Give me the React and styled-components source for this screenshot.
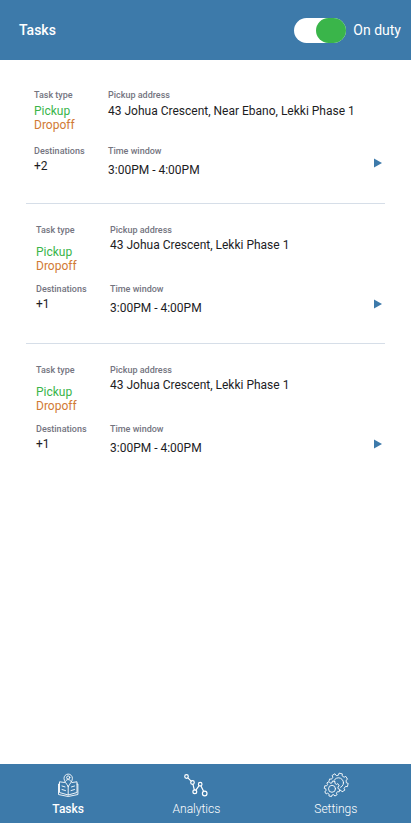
import React, { useState } from 'react';
import styled, { createGlobalStyle, css } from 'styled-components';

const blue = '#3d7aaa';
const green = '#3ab54a';
const orange = '#d17a34';

const GlobalStyle = createGlobalStyle`
  * {
    box-sizing: border-box;
  }

  body {
    margin: 0;
    background: #fff;
    color: #1d1d1f;
    font-family: Roboto, "Liberation Sans", sans-serif;
    font-size: 12px;
    line-height: 14px;
  }
`;

const Page = styled.div`
  display: flex;
  flex-direction: column;
  min-height: 100vh;
`;

const Header = styled.header`
  display: flex;
  align-items: center;
  justify-content: space-between;
  height: 60px;
  padding: 0 10px 0 19px;
  background: ${blue};
  color: #fff;
`;

const Title = styled.h1`
  margin: 0;
  font-size: 14px;
  font-weight: 500;
  line-height: 16px;
`;

const Duty = styled.label`
  display: flex;
  align-items: center;
  gap: 7px;
  font-size: 14px;
  line-height: 16px;
  cursor: pointer;
`;

const Toggle = styled.input`
  appearance: none;
  display: flex;
  width: 52px;
  height: 25px;
  margin: 0;
  border-radius: 13px;
  background: #fff;
  cursor: pointer;

  &::before {
    content: '';
    width: 30px;
    border-radius: 13px;
    background: #9aa5ae;
  }

  &:checked {
    justify-content: flex-end;
  }

  &:checked::before {
    background: ${green};
  }
`;

const List = styled.main`
  flex: 1;
  padding: 0 26px;
`;

const Card = styled.article`
  display: grid;
  grid-template-columns: 74px 1fr auto;
  row-gap: 10px;
  padding: 20px 0 28px 10px;

  & + & {
    border-top: 1px solid #d6dee8;
  }

  ${({ $compact }) => $compact && css`
    row-gap: 13px;
    padding: 29px 0 26px 8px;
  `}
`;

const Field = styled.div`
  display: flex;
  flex-direction: column;
  gap: ${({ $gap }) => $gap || 2}px;
  grid-column: ${({ $wide }) => ($wide ? 'span 2' : 'auto')};
`;

const Label = styled.span`
  color: #747480;
  font-size: 9px;
  font-weight: 500;
  line-height: 12px;
`;

const Kind = styled.span`
  display: block;
  color: ${({ $color }) => $color};
`;

const Open = styled.button`
  display: flex;
  align-items: center;
  justify-content: center;
  align-self: end;
  width: 14px;
  height: ${({ $compact }) => ($compact ? 28 : 22)}px;
  padding: 0;
  border: 0;
  background: none;
  color: ${blue};
  cursor: pointer;
`;

const Nav = styled.nav`
  display: grid;
  grid-template-columns: 128fr 128fr 150fr;
  height: 59px;
  padding-left: 4px;
  background: ${blue};
`;

const NavLink = styled.a`
  display: flex;
  flex-direction: column;
  align-items: center;
  gap: 4px;
  padding-top: 8px;
  color: #fff;
  font-weight: ${({ $active }) => ($active ? 500 : 300)};
  text-decoration: none;

  svg {
    fill: none;
    stroke: #fff;
    stroke-linejoin: round;
    stroke-linecap: round;
  }
`;

function gear(cx, cy, outer, inner, teeth) {
  const step = (Math.PI * 2) / teeth;
  const points = [];
  for (let i = 0; i < teeth; i++) {
    const a = (i + 0.3) * step - Math.PI / 2;
    [[-0.3, inner], [-0.22, outer], [0.22, outer], [0.3, inner]].forEach(([t, r]) => {
      points.push(`${(cx + r * Math.cos(a + t * step)).toFixed(2)} ${(cy + r * Math.sin(a + t * step)).toFixed(2)}`);
    });
  }
  return `M${points.join('L')}Z`;
}

const TasksIcon = () => (
  <svg width="24" height="26" viewBox="0 0 24 26" strokeWidth="0.9" aria-hidden="true">
    <path d="M8.5 10.5L3.5 9.800V20.500l8.700 2.500L21 20.500V9.800L16 10.500" />
    <path d="M3.500 12H2.500V22.500l9.700 2 9.700-2V12H21" />
    <path d="M12.200 14.500C10.500 11.500 8 9.300 8 6.300a4.200 4.200 0 0 1 8.400 0C16.400 9.300 14 11.500 12.200 14.500ZM12.200 14.500V23" />
    <circle cx="12.200" cy="5.500" r="1.600" />
    <path d="M9.600 9.200c.6-1.200 1.500-1.600 2.600-1.600s2 .4 2.600 1.600" />
    <path d="M6 14l3 .9M6 17.500l3.500 1.100M18.500 14l-3 .9M18.500 17.500l-3.500 1.100" />
  </svg>
);

const AnalyticsIcon = () => (
  <svg width="24" height="26" viewBox="0 0 24 26" strokeWidth="1.2" aria-hidden="true">
    <circle cx="2.500" cy="4.500" r="1.800" />
    <circle cx="8.500" cy="10.500" r="1.800" />
    <circle cx="10.800" cy="19.800" r="1.900" />
    <circle cx="16.200" cy="12.200" r="1.800" />
    <circle cx="20.700" cy="21.500" r="2.300" />
    <path d="M3.800 5.800l3.400 3.400M9 12.300l1.300 5.600M11.900 18.200l3.200-4.500M17 13.900l2.700 5.500" />
  </svg>
);

const SettingsIcon = () => (
  <svg width="26" height="26" viewBox="0 0 26 26" strokeWidth="0.9" aria-hidden="true">
    <path d={gear(15.5, 10.8, 9.700, 7.900, 8)} />
    <circle cx="15.500" cy="10.800" r="5" />
    <circle cx="9" cy="16.800" r="8.200" fill={blue} stroke="none" />
    <path d={gear(9, 16.8, 7.8, 6.2, 8)} />
    <circle cx="9" cy="16.800" r="3.500" />
  </svg>
);

const tasks = [
  { id: 1, address: '43 Johua Crescent, Near Ebano, Lekki Phase 1', destinations: '+2', compact: true },
  { id: 2, address: '43 Johua Crescent, Lekki Phase 1', destinations: '+1' },
  { id: 3, address: '43 Johua Crescent, Lekki Phase 1', destinations: '+1' },
];

const TaskCard = ({ task }) => (
  <Card $compact={task.compact}>
    <Field $gap={task.compact ? 3 : 9}>
      <Label>Task type</Label>
      <div>
        <Kind $color={green}>Pickup</Kind>
        <Kind $color={orange}>Dropoff</Kind>
      </div>
    </Field>
    <Field $wide $gap={task.compact ? 3 : 2}>
      <Label>Pickup address</Label>
      <span>{task.address}</span>
    </Field>
    <Field>
      <Label>Destinations</Label>
      <span>{task.destinations}</span>
    </Field>
    <Field $gap={6}>
      <Label>Time window</Label>
      <span>3:00PM - 4:00PM</span>
    </Field>
    <Open type="button" aria-label="Open task" $compact={task.compact}>
      <svg width="8" height="10" viewBox="0 0 8 10" fill="currentColor" aria-hidden="true">
        <path d="M0 .5L8 5 0 9.500Z" />
      </svg>
    </Open>
  </Card>
);

export default function App() {
  const [onDuty, setOnDuty] = useState(true);

  return (
    <Page>
      <GlobalStyle />
      <Header>
        <Title>Tasks</Title>
        <Duty>
          <Toggle
            type="checkbox"
            role="switch"
            checked={onDuty}
            onChange={(e) => setOnDuty(e.target.checked)}
          />
          On duty
        </Duty>
      </Header>
      <List>
        {tasks.map((task) => <TaskCard key={task.id} task={task} />)}
      </List>
      <Nav>
        <NavLink href="#tasks" $active aria-current="page">
          <TasksIcon />
          Tasks
        </NavLink>
        <NavLink href="#analytics">
          <AnalyticsIcon />
          Analytics
        </NavLink>
        <NavLink href="#settings">
          <SettingsIcon />
          Settings
        </NavLink>
      </Nav>
    </Page>
  );
}
